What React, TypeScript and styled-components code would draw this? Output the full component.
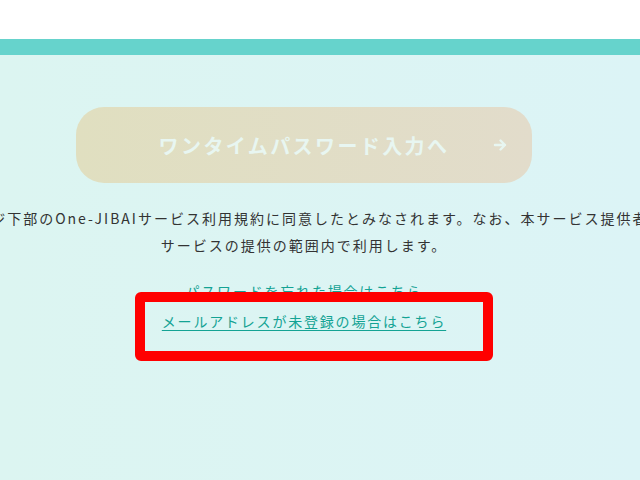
import React from "react";
import styled, { createGlobalStyle } from "styled-components";

const Global = createGlobalStyle`
  html, body { margin: 0; padding: 0; }
  body {
    width: 640px;
    height: 480px;
    overflow: hidden;
    font-family: "Noto Sans CJK JP", "Noto Sans", sans-serif;
    background: #dcf5f4;
  }
`;

const Page = styled.div`
  position: relative;
  width: 640px;
  height: 480px;
  overflow: hidden;
  display: flex;
  flex-direction: column;
`;

const Header = styled.div`
  height: 39px;
  background: #ffffff;
  flex: none;
`;

const Bar = styled.div`
  height: 16px;
  background: #66d3cc;
  flex: none;
`;

const Main = styled.main`
  flex: 1;
  background: linear-gradient(90deg, #dcf5f1 0%, #dcf4f6 100%);
  display: flex;
  flex-direction: column;
  align-items: center;
  padding: 52px 32px 0 0;
  overflow: hidden;
`;

const SubmitButton = styled.button`
  width: 456px;
  height: 76px;
  border: none;
  border-radius: 28px;
  background: linear-gradient(90deg, #e0dfc0 0%, #e2dccb 100%);
  display: flex;
  align-items: center;
  justify-content: center;
  position: relative;
  font-family: "Noto Sans CJK JP", sans-serif;
  font-weight: 600;
  font-size: 20px;
  letter-spacing: 2.4px;
  color: #e8f6f1;
  padding: 0;
  cursor: default;
`;

const ArrowSlot = styled.span`
  position: absolute;
  right: 25px;
  top: 50%;
  transform: translateY(-50%);
  display: flex;
`;

const Note = styled.p`
  margin: 22px 0 0;
  width: 100%;
  font-size: 14px;
  line-height: 27px;
  letter-spacing: 2px;
  color: #333333;
  text-align: center;
`;

const NoteLine = styled.span`
  display: block;
  white-space: nowrap;
  margin: 0 -200px;
`;

const LinkList = styled.div`
  margin-top: 21px;
  display: flex;
  flex-direction: column;
  align-items: center;
  gap: 8px;
`;

const TextLink = styled.a<{ $underline?: boolean }>`
  font-size: 14px;
  line-height: 22px;
  letter-spacing: 1.8px;
  color: #14a394;
  text-decoration: ${(p) => (p.$underline ? "underline" : "none")};
  text-underline-offset: 3px;
`;

const Highlight = styled.div`
  position: absolute;
  left: 135px;
  top: 292px;
  width: 358px;
  height: 69px;
  box-sizing: border-box;
  border: 10px solid #ff0000;
  border-radius: 6px;
  pointer-events: none;
`;

export default function App() {
  return (
    <>
      <Global />
      <Page>
        <Header />
        <Bar />
        <Main>
          <SubmitButton type="button">
            ワンタイムパスワード入力へ
            <ArrowSlot>
              <svg width="14" height="14" viewBox="0 0 14 14" fill="none" stroke="#e8f6f1" strokeWidth="2.4" strokeLinecap="round" strokeLinejoin="round">
                <path d="M2 7h10M7.5 2.5L12 7l-4.5 4.5" />
              </svg>
            </ArrowSlot>
          </SubmitButton>
          <Note>
            <NoteLine>本ページ下部のOne-JIBAIサービス利用規約に同意したとみなされます。なお、本サービス提供者は</NoteLine>
            <NoteLine>サービスの提供の範囲内で利用します。</NoteLine>
          </Note>
          <LinkList>
            <TextLink>パスワードを忘れた場合はこちら</TextLink>
            <TextLink $underline>メールアドレスが未登録の場合はこちら</TextLink>
          </LinkList>
        </Main>
        <Highlight />
      </Page>
    </>
  );
}
